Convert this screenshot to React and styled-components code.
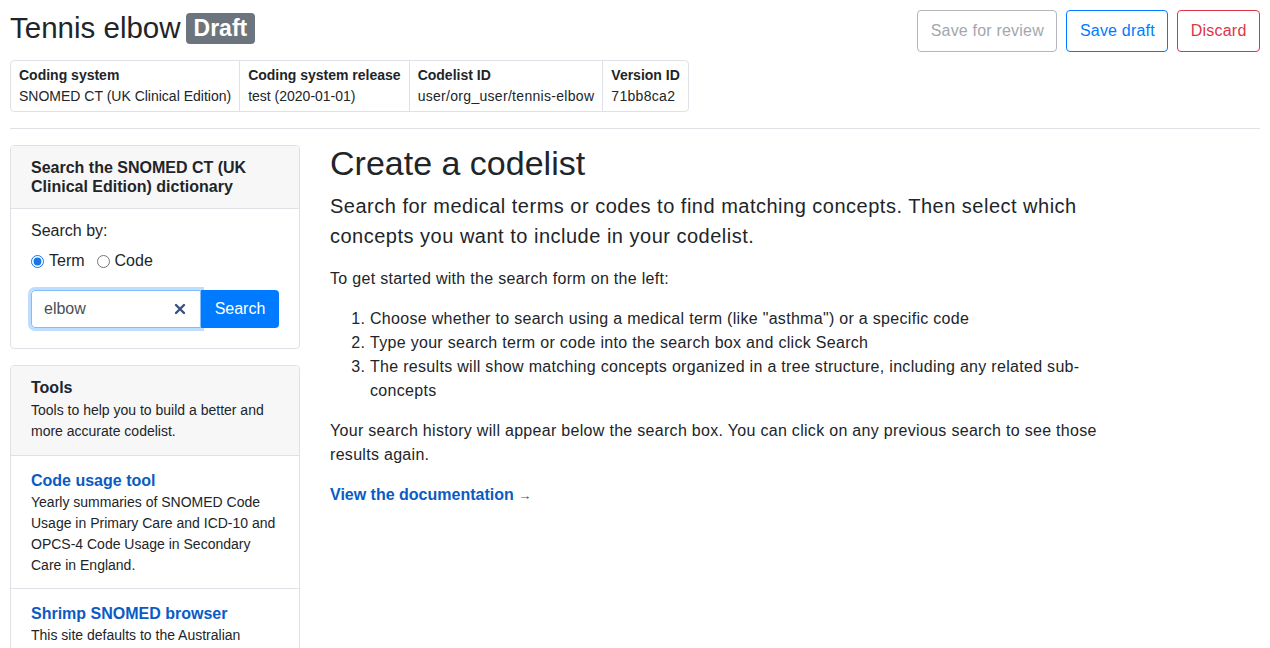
import React, { useState } from "react";
import styled, { createGlobalStyle } from "styled-components";

const GlobalStyle = createGlobalStyle`
  body {
    margin: 0;
    font-family: "Liberation Sans", Arial, sans-serif;
    color: #212529;
    background: #fff;
  }
  * { box-sizing: border-box; }
`;

const Page = styled.div`
  padding: 10px 10px 0 10px;
`;

const TopBar = styled.div`
  display: flex;
  justify-content: space-between;
  align-items: flex-start;
`;

const Title = styled.h1`
  margin: 2px 0 0 0;
  font-size: 29.5px;
  font-weight: 400;
  line-height: 32px;
  display: flex;
  align-items: center;
  gap: 5px;
`;

const Badge = styled.span`
  background: #6c757d;
  color: #fff;
  font-size: 23px;
  font-weight: 700;
  line-height: 23px;
  padding: 4px 8px;
  border-radius: 4px;
`;

const ButtonRow = styled.div`
  display: flex;
  gap: 9px;
`;

const OutlineButton = styled.button`
  font-family: inherit;
  font-size: 16px;
  letter-spacing: 0.2px;
  height: 42px;
  padding: 0 12.5px;
  background: #fff;
  border-radius: 4px;
  border: 1px solid ${(p) => p.$border};
  color: ${(p) => p.$color};
  cursor: pointer;
`;

const MetaTable = styled.div`
  display: inline-flex;
  margin-top: 8px;
  border: 1px solid #dee2e6;
  border-radius: 4px;
  font-size: 14px;
`;

const MetaCell = styled.div`
  padding: 4px 8px;
  border-left: ${(p) => (p.$first ? "none" : "1px solid #dee2e6")};
  line-height: 21px;
`;

const MetaLabel = styled.div`
  font-weight: 700;
`;

const MetaValue = styled.div`
  letter-spacing: ${(p) => p.$spacing || "0"};
`;

const Rule = styled.hr`
  border: none;
  border-top: 1px solid #dee2e6;
  margin: 16px 0 16px 0;
`;

const Columns = styled.div`
  display: flex;
  gap: 30px;
  align-items: flex-start;
`;

const Sidebar = styled.div`
  width: 290px;
  flex-shrink: 0;
  display: flex;
  flex-direction: column;
  gap: 16px;
`;

const Card = styled.div`
  border: 1px solid #dee2e6;
  border-radius: 4px;
  overflow: hidden;
`;

const CardHeader = styled.div`
  background: #f7f7f7;
  border-bottom: 1px solid #dee2e6;
  padding: ${(p) => p.$pad || "12px 20px"};
`;

const CardTitle = styled.div`
  font-weight: 700;
  font-size: 16px;
  line-height: 19px;
`;

const CardText = styled.div`
  font-size: 14px;
  line-height: 21px;
  margin-top: ${(p) => p.$mt || "0"};
`;

const CardBody = styled.div`
  padding: 10px 20px 20px 20px;
`;

const Label = styled.div`
  font-size: 16px;
  line-height: 24px;
`;

const RadioRow = styled.div`
  display: flex;
  gap: 12px;
  margin-top: 6px;
  font-size: 16px;
  line-height: 24px;
`;

const RadioLabel = styled.label`
  display: flex;
  align-items: center;
  gap: 5px;
`;

const Radio = styled.input`
  margin: 0;
  width: 13px;
  height: 13px;
  accent-color: #1a73e8;
`;

const InputGroup = styled.div`
  display: flex;
  margin-top: 17px;
`;

const InputWrap = styled.div`
  position: relative;
  width: 170px;
  height: 38px;
  border: 1px solid #80bdff;
  border-radius: 4px 0 0 4px;
  box-shadow: 0 0 0 3px rgba(0, 123, 255, 0.25);
  display: flex;
  align-items: center;
  padding: 0 12px;
`;

const TextInput = styled.input`
  border: none;
  outline: none;
  font-family: inherit;
  font-size: 16px;
  color: #495057;
  width: 100%;
  padding: 0;
`;

const ClearIcon = styled.span`
  position: absolute;
  right: 14px;
  top: 12px;
  display: flex;
`;

const SearchButton = styled.button`
  font-family: inherit;
  font-size: 16px;
  height: 38px;
  width: 78px;
  background: #007bff;
  color: #fff;
  border: none;
  border-radius: 0 4px 4px 0;
`;

const ToolItem = styled.div`
  padding: 13px 20px 12px 20px;
  border-top: ${(p) => (p.$first ? "none" : "1px solid #dee2e6")};
`;

const ToolLink = styled.a`
  display: block;
  color: #0a5bc4;
  font-weight: 700;
  font-size: 16px;
  line-height: 23px;
  text-decoration: none;
`;

const Main = styled.div`
  max-width: 780px;
`;

const Heading = styled.h2`
  font-size: 34px;
  font-weight: 400;
  line-height: 40px;
  margin: -2px 0 8px 0;
`;

const Lead = styled.p`
  font-size: 20px;
  letter-spacing: 0.5px;
  line-height: 30px;
  margin: 0 0 16px 0;
`;

const Para = styled.p`
  font-size: 16px;
  letter-spacing: 0.3px;
  line-height: 24px;
  margin: 0 0 16px 0;
`;

const Steps = styled.ol`
  font-size: 16px;
  letter-spacing: 0.3px;
  line-height: 24px;
  margin: 0 0 16px 0;
  padding-left: 40px;
`;

const DocLink = styled.a`
  color: #0a5bc4;
  font-weight: 700;
  font-size: 16px;
  line-height: 24px;
  text-decoration: none;
`;

const Arrow = styled.span`
  font-size: 13px;
  font-weight: 400;
`;

const meta = [
  ["Coding system", "SNOMED CT (UK Clinical Edition)"],
  ["Coding system release", "test (2020-01-01)"],
  ["Codelist ID", "user/org_user/tennis-elbow", "0.3px"],
  ["Version ID", "71bb8ca2", "0.3px"],
];

const tools = [
  {
    name: "Code usage tool",
    text: "Yearly summaries of SNOMED Code Usage in Primary Care and ICD-10 and OPCS-4 Code Usage in Secondary Care in England.",
  },
  {
    name: "Shrimp SNOMED browser",
    text: "This site defaults to the Australian edition of SNOMED CT but can be used to browse the UK edition.",
  },
];

export default function App() {
  const [mode, setMode] = useState("term");
  const [query, setQuery] = useState("elbow");

  return (
    <Page>
      <GlobalStyle />
      <TopBar>
        <Title>
          Tennis elbow <Badge>Draft</Badge>
        </Title>
        <ButtonRow>
          <OutlineButton $border="#b3b7bb" $color="#a2a7ad">
            Save for review
          </OutlineButton>
          <OutlineButton $border="#007bff" $color="#007bff">
            Save draft
          </OutlineButton>
          <OutlineButton $border="#dc3545" $color="#dc3545">
            Discard
          </OutlineButton>
        </ButtonRow>
      </TopBar>

      <MetaTable>
        {meta.map(([label, value, spacing], i) => (
          <MetaCell key={label} $first={i === 0}>
            <MetaLabel>{label}</MetaLabel>
            <MetaValue $spacing={spacing}>{value}</MetaValue>
          </MetaCell>
        ))}
      </MetaTable>

      <Rule />

      <Columns>
        <Sidebar>
          <Card>
            <CardHeader>
              <CardTitle>Search the SNOMED CT (UK Clinical Edition) dictionary</CardTitle>
            </CardHeader>
            <CardBody>
              <Label>Search by:</Label>
              <RadioRow>
                <RadioLabel>
                  <Radio
                    type="radio"
                    name="mode"
                    checked={mode === "term"}
                    onChange={() => setMode("term")}
                  />
                  Term
                </RadioLabel>
                <RadioLabel>
                  <Radio
                    type="radio"
                    name="mode"
                    checked={mode === "code"}
                    onChange={() => setMode("code")}
                  />
                  Code
                </RadioLabel>
              </RadioRow>
              <InputGroup>
                <InputWrap>
                  <TextInput value={query} onChange={(e) => setQuery(e.target.value)} />
                  <ClearIcon>
                    <svg width="12" height="12" viewBox="0 0 12 12">
                      <path
                        d="M2 2 L10 10 M10 2 L2 10"
                        stroke="#37517e"
                        strokeWidth="2.4"
                        strokeLinecap="round"
                      />
                    </svg>
                  </ClearIcon>
                </InputWrap>
                <SearchButton>Search</SearchButton>
              </InputGroup>
            </CardBody>
          </Card>

          <Card>
            <CardHeader $pad="12px 20px 13px 20px">
              <CardTitle>Tools</CardTitle>
              <CardText $mt="3px">Tools to help you to build a better and more accurate codelist.</CardText>
            </CardHeader>
            {tools.map((t, i) => (
              <ToolItem key={t.name} $first={i === 0}>
                <ToolLink href="#">{t.name}</ToolLink>
                <CardText>{t.text}</CardText>
              </ToolItem>
            ))}
          </Card>
        </Sidebar>

        <Main>
          <Heading>Create a codelist</Heading>
          <Lead>
            Search for medical terms or codes to find matching concepts. Then select which
            concepts you want to include in your codelist.
          </Lead>
          <Para>To get started with the search form on the left:</Para>
          <Steps>
            <li>Choose whether to search using a medical term (like "asthma") or a specific code</li>
            <li>Type your search term or code into the search box and click Search</li>
            <li>
              The results will show matching concepts organized in a tree structure, including any
              related sub-concepts
            </li>
          </Steps>
          <Para>
            Your search history will appear below the search box. You can click on any previous
            search to see those results again.
          </Para>
          <DocLink href="#">
            View the documentation <Arrow>→</Arrow>
          </DocLink>
        </Main>
      </Columns>
    </Page>
  );
}
